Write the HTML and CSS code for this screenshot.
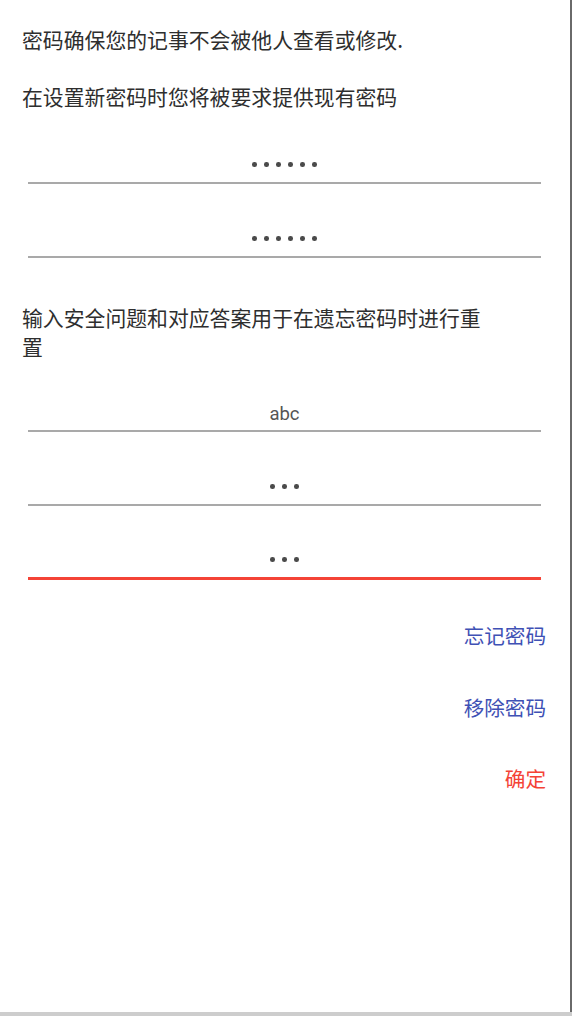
FILE: index.html
```html
<!DOCTYPE html>
<html lang="zh-CN">
<head>
<meta charset="utf-8">
<title>密码</title>
<link rel="stylesheet" href="styles.css">
</head>
<body>
<div class="frame">
  <main class="screen">
    <p class="note first">密码确保您的记事不会被他人查看或修改.</p>
    <p class="note second">在设置新密码时您将被要求提供现有密码</p>
    <div class="field f1"><span class="dots"><i></i><i></i><i></i><i></i><i></i><i></i></span></div>
    <div class="field"><span class="dots"><i></i><i></i><i></i><i></i><i></i><i></i></span></div>
    <p class="note third">输入安全问题和对应答案用于在遗忘密码时进行重置</p>
    <div class="field f3"><span class="plain">abc</span></div>
    <div class="field"><span class="dots"><i></i><i></i><i></i></span></div>
    <div class="field focused"><span class="dots"><i></i><i></i><i></i></span></div>
    <div class="actions">
      <button class="action blue">忘记密码</button>
      <button class="action blue">移除密码</button>
      <button class="action red">确定</button>
    </div>
  </main>
  <div class="bottombar"></div>
</div>
</body>
</html>
```

FILE: styles.css
```css
html, body {
  margin: 0;
  padding: 0;
  background: #ffffff;
}
body {
  font-family: "Noto Sans CJK SC", "Noto Sans", Roboto, sans-serif;
  color: #333333;
}
.frame {
  width: 572px;
  height: 1016px;
  display: flex;
  flex-direction: column;
}
.screen {
  flex: 1;
  border-right: 2px solid #6a6a6a;
  padding-top: 25px;
  display: flex;
  flex-direction: column;
}
.bottombar {
  height: 4px;
  background: #cdcdcd;
}
.note {
  margin: 0 0 0 22px;
  max-width: 470px;
  font-size: 20.85px;
  line-height: 29px;
  color: #2e2e2e;
}
.note.second {
  margin-top: 28px;
}
.note.third {
  margin-top: 45px;
}
.field {
  margin: 0 29px 0 28px;
  height: 72px;
  border-bottom: 2px solid #a9a9a9;
  display: flex;
  justify-content: center;
  align-items: flex-end;
  padding-bottom: 0;
  box-sizing: content-box;
}
.field.f1 {
  height: 71px;
}
.field.f3 {
  height: 69px;
}
.field.focused {
  height: 71px;
  border-bottom: 3px solid #f44336;
}
.dots {
  display: flex;
  gap: 7.5px;
  margin-bottom: 15px;
}
.dots i {
  display: block;
  width: 4.6px;
  height: 4.6px;
  border-radius: 50%;
  background: #4a4a4a;
}
.plain {
  font-family: Roboto, "Noto Sans", sans-serif;
  font-size: 18.5px;
  line-height: 20px;
  color: #555555;
  margin-bottom: 6px;
}
.actions {
  display: flex;
  flex-direction: column;
  align-items: flex-end;
  padding-top: 20px;
  padding-right: 24px;
}
.action {
  background: none;
  border: none;
  padding: 0;
  margin: 0;
  height: 71.5px;
  font-family: "Noto Sans CJK SC", "Noto Sans", sans-serif;
  font-size: 20.6px;
  line-height: 71.5px;
}
.action.blue {
  color: #3f51b5;
}
.action.red {
  color: #f44336;
}
```
